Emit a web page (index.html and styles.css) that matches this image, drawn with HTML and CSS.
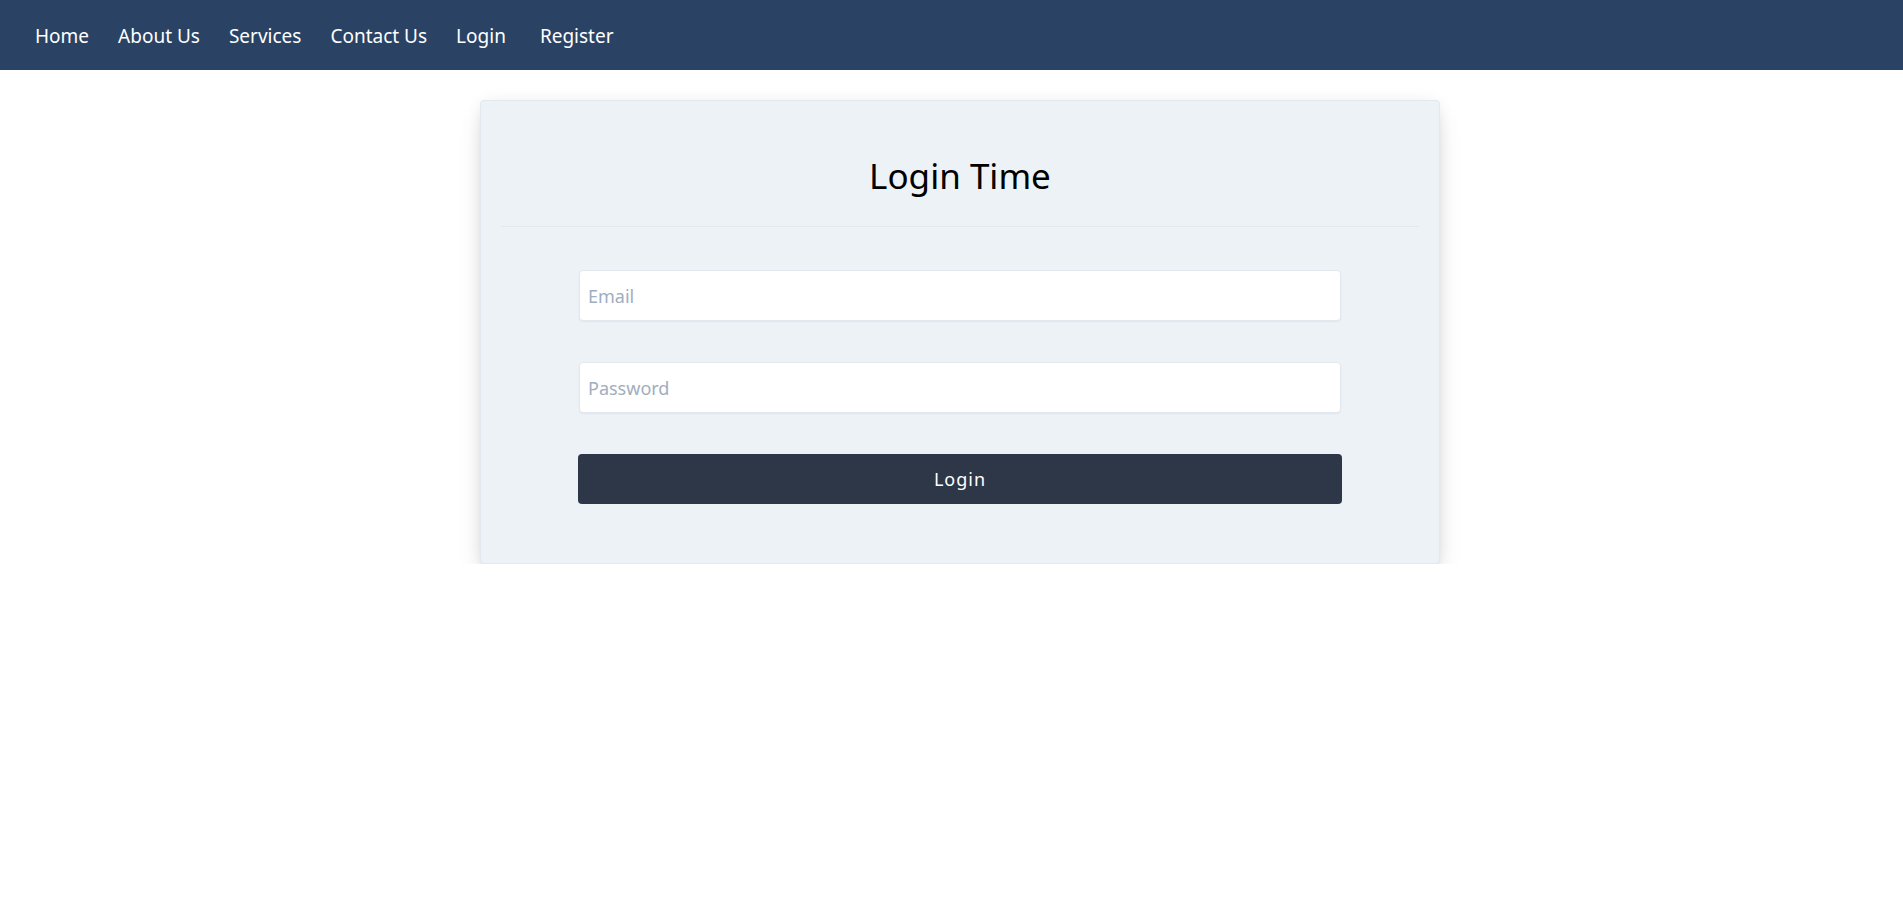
FILE: index.html
```html
<!DOCTYPE html>
<html lang="en">
<head>
<meta charset="utf-8">
<title>Login Time</title>
<link rel="stylesheet" href="styles.css">
</head>
<body>
<nav class="navbar">
  <a class="nav-link" href="#">Home</a>
  <a class="nav-link" href="#">About Us</a>
  <a class="nav-link" href="#">Services</a>
  <a class="nav-link" href="#">Contact Us</a>
  <a class="nav-link" href="#">Login</a>
  <a class="nav-link nav-register" href="#">Register</a>
</nav>
<main class="page">
  <section class="card">
    <header class="card-header">
      <h1 class="card-title">Login Time</h1>
    </header>
    <form class="login-form">
      <input class="field" type="email" placeholder="Email">
      <input class="field" type="password" placeholder="Password">
      <button class="submit" type="button">Login</button>
    </form>
  </section>
</main>
</body>
</html>
```
FILE: styles.css
```css
* { box-sizing: border-box; }
html, body { margin: 0; padding: 0; background: #ffffff; }
body { font-family: "Noto Sans", "Open Sans", sans-serif; color: #000; }

.navbar {
  height: 70px;
  background: #2a4365;
  display: flex;
  align-items: center;
  gap: 29px;
  padding: 1px 0 0 35px;
}
.nav-link {
  color: #ffffff;
  text-decoration: none;
  font-size: 19px;
}
.nav-register { margin-left: 5px; }

.page {
  padding: 30px 0 0 17px;
}
.card {
  width: 960px;
  margin: 0 auto;
  background: #edf2f7;
  border: 1px solid #e2e8f0;
  border-radius: 4px;
  box-shadow: 0 14px 24px -4px rgba(0,0,0,0.14), 0 6px 10px -4px rgba(0,0,0,0.07), 0 0 16px rgba(0,0,0,0.05);
  padding: 0 20px 59px;
}
.card-header {
  padding: 48px 0 23px;
  border-bottom: 1px solid #e2e8f0;
}
.card-title {
  margin: 0;
  font-size: 35px;
  line-height: 54px;
  font-weight: 400;
  text-align: center;
}
.login-form {
  width: 764px;
  margin: 43px auto 0;
  display: flex;
  flex-direction: column;
  gap: 41px;
}
.field {
  height: 51px;
  margin: 0 1px;
  border: 1px solid #e2e8f0;
  border-radius: 4px;
  background: #fff;
  padding: 0 8px;
  font-family: inherit;
  font-size: 18px;
  color: #4a5568;
  box-shadow: 0 1px 2px rgba(0,0,0,0.06);
  outline: none;
}
.field::placeholder { color: #a0aec0; }
.submit {
  height: 50px;
  border: none;
  border-radius: 4px;
  background: #2d3748;
  color: #fff;
  font-family: inherit;
  font-size: 18px;
  letter-spacing: 1px;
  cursor: pointer;
}
```
